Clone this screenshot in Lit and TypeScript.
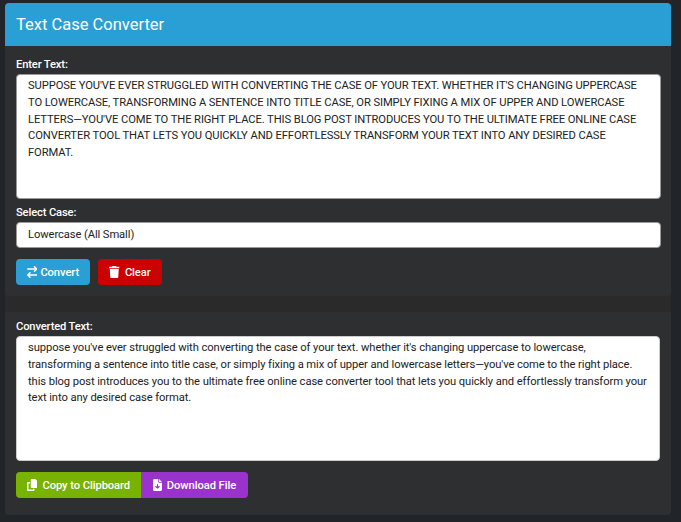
import { LitElement, html, css } from "lit";
import { customElement } from "lit/decorators.js";

const UP = "SUPPOSE YOU'VE EVER STRUGGLED WITH CONVERTING THE CASE OF YOUR TEXT. WHETHER IT'S CHANGING UPPERCASE TO LOWERCASE, TRANSFORMING A SENTENCE INTO TITLE CASE, OR SIMPLY FIXING A MIX OF UPPER AND LOWERCASE LETTERS—YOU'VE COME TO THE RIGHT PLACE. THIS BLOG POST INTRODUCES YOU TO THE ULTIMATE FREE ONLINE CASE CONVERTER TOOL THAT LETS YOU QUICKLY AND EFFORTLESSLY TRANSFORM YOUR TEXT INTO ANY DESIRED CASE FORMAT.";
const LOW = UP.toLowerCase();

const icon = (vb: string, d: string) =>
  html`<svg class="ico" viewBox="0 0 ${vb} 512" aria-hidden="true"><path fill="currentColor" d=${d}></path></svg>`;

const EXCHANGE = "M438.6 150.6c12.5-12.5 12.5-32.8 0-45.3l-96-96c-12.5-12.5-32.8-12.5-45.3 0s-12.5 32.8 0 45.3L338.7 96 32 96C14.3 96 0 110.3 0 128s14.3 32 32 32l306.7 0-41.4 41.4c-12.5 12.5-12.5 32.8 0 45.3s32.8 12.5 45.3 0l96-96zm-333.3 352c12.5 12.5 32.8 12.5 45.3 0s12.5-32.8 0-45.3L109.3 416 416 416c17.7 0 32-14.3 32-32s-14.3-32-32-32l-306.7 0 41.4-41.4c12.5-12.5 12.5-32.8 0-45.3s-32.8-12.5-45.3 0l-96 96c-12.5 12.5-12.5 32.8 0 45.3l96 96z";
const TRASH = "M135.2 17.7L128 32H32C14.3 32 0 46.3 0 64S14.3 96 32 96H416c17.7 0 32-14.3 32-32s-14.3-32-32-32H320l-7.2-14.3C307.4 6.8 296.3 0 284.2 0H163.8c-12.1 0-23.2 6.8-28.6 17.7zM416 128H32L53.2 467c1.6 25.3 22.6 45 47.9 45H346.9c25.3 0 46.3-19.7 47.9-45L416 128z";
const COPY = "M208 0H332.1c12.7 0 24.9 5.1 33.9 14.1l67.9 67.9c9 9 14.1 21.2 14.1 33.9V336c0 26.5-21.5 48-48 48H208c-26.5 0-48-21.5-48-48V48c0-26.5 21.5-48 48-48zM48 128h80v64H64V448H256V416h64v48c0 26.5-21.5 48-48 48H48c-26.5 0-48-21.5-48-48V176c0-26.5 21.5-48 48-48z";
const FILE = "M64 0C28.7 0 0 28.7 0 64V448c0 35.3 28.7 64 64 64H320c35.3 0 64-28.7 64-64V160H256c-17.7 0-32-14.3-32-32V0H64zM256 0V128H384L256 0zM216 232V334.1l31-31c9.4-9.4 24.6-9.4 33.9 0s9.4 24.6 0 33.9l-72 72c-9.4 9.4-24.6 9.4-33.9 0l-72-72c-9.4-9.4-9.4-24.6 0-33.9s24.6-9.4 33.9 0l31 31V232c0-13.3 10.7-24 24-24s24 10.7 24 24z";

@customElement("app-root")
export class AppRoot extends LitElement {
  static styles = css`
    :host {
      display: block;
      min-height: 522px;
      background: #212529;
      font-family: Roboto, "Liberation Sans", sans-serif;
      font-size: 11.2px;
      color: #fff;
      overflow: hidden;
    }
    .app {
      display: flex;
      flex-direction: column;
      margin: 3px 10px 7px 5px;
    }
    .head {
      height: 43px;
      box-sizing: border-box;
      background: #2a9fd6;
      border-radius: 4px 4px 0 0;
      padding: 0 11px;
      display: flex;
      align-items: center;
      font-size: 16.5px;
      font-weight: 450;
    }
    .stack {
      display: flex;
      flex-direction: column;
      gap: 16px;
      background: #2a2a2a;
      border-radius: 0 0 4px 4px;
    }
    .panel {
      display: flex;
      flex-direction: column;
      background: #2e2f31;
      padding: 11px 10px 11px 11px;
      border-radius: 0 0 4px 4px;
    }
    .panel.out {
      padding-top: 7px;
      padding-bottom: 17px;
    }
    label {
      display: block;
      line-height: 16px;
      margin-bottom: 1px;
      font-weight: 500;
      letter-spacing: -0.15px;
      color: #fff;
    }
    textarea, .select {
      display: block;
      width: 100%;
      box-sizing: border-box;
      background: #fff;
      color: #222;
      border: 1px solid #999;
      border-radius: 4px;
      font: 400 11.2px/16.8px Roboto, "Liberation Sans", sans-serif;
      padding: 3px 11px;
      margin: 0;
      outline: none;
    }
    textarea {
      height: 125px;
      resize: none;
      overflow: hidden;
      letter-spacing: -0.09px;
    }
    .out textarea {
      border-color: #ccc;
      width: calc(100% - 1px);
      padding-right: 8px;
      letter-spacing: -0.08px;
    }
    .sel-label { margin-top: 6px; }
    .select {
      height: 26px;
      appearance: none;
      -webkit-appearance: none;
      padding: 0 11px;
      letter-spacing: -0.09px;
    }
    .btns {
      display: flex;
      gap: 8px;
      margin-top: 11px;
    }
    .group { display: flex; margin-top: 11px; }
    button {
      height: 26px;
      box-sizing: border-box;
      border: 0;
      border-radius: 4px;
      color: #fff;
      font: 500 11.2px Roboto, "Liberation Sans", sans-serif;
      letter-spacing: -0.08px;
      display: inline-flex;
      align-items: center;
      padding: 0;
      justify-content: center;
    }
    .ico { height: 12px; display: block; flex: none; }
    .convert { background: #2a9fd6; width: 74px; gap: 3px; }
    .clear { background: #cc0000; width: 64px; gap: 5px; }
    .copy { background: #77b300; width: 125px; gap: 5px; border-radius: 4px 0 0 4px; }
    .dl { background: #9933cc; width: 107px; gap: 5px; border-radius: 0 4px 4px 0; }
  `;

  render() {
    return html`
      <div class="app">
        <div class="head">Text Case Converter</div>
        <div class="stack">
          <section class="panel">
            <label for="in">Enter Text:</label>
            <textarea id="in" .value=${UP}></textarea>
            <label class="sel-label" for="case">Select Case:</label>
            <select id="case" class="select">
              <option>Lowercase (All Small)</option>
            </select>
            <div class="btns">
              <button class="convert">${icon("448", EXCHANGE)}Convert</button>
              <button class="clear">${icon("448", TRASH)}Clear</button>
            </div>
          </section>
          <section class="panel out">
            <label for="res">Converted Text:</label>
            <textarea id="res" readonly .value=${LOW}></textarea>
            <div class="group">
              <button class="copy">${icon("448", COPY)}Copy to Clipboard</button>
              <button class="dl">${icon("384", FILE)}Download File</button>
            </div>
          </section>
        </div>
      </div>
    `;
  }
}
